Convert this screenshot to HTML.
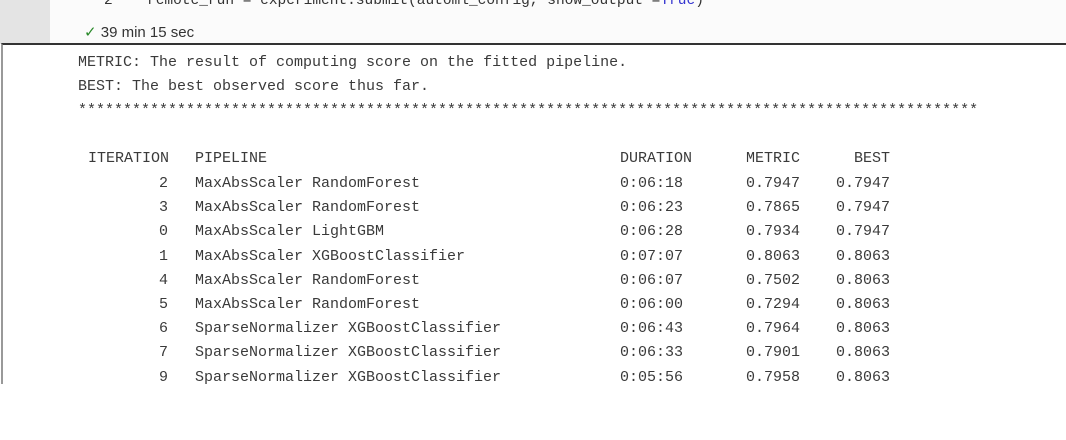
<!DOCTYPE html>
<html><head><meta charset="utf-8"><style>
html,body{margin:0;padding:0;width:1066px;height:440px;overflow:hidden;background:#fff;position:relative}
.top{position:absolute;left:0;top:0;width:1066px;height:44px;background:#fbfbfb}
.strip{position:absolute;left:0;top:0;width:50px;height:44px;background:#e4e4e4}
.code{position:absolute;top:-7px;font:14.5px "Liberation Mono",monospace;color:#333;white-space:pre}
.box{position:absolute;left:1px;top:43px;width:1070px;height:340px;border-top:2px solid #333;border-left:2px solid #999;background:#fff}
.m{position:absolute;font:15px "Liberation Mono",monospace;color:#3a3a3a;white-space:pre;line-height:18px}
.r{text-align:right}
</style></head><body>
<div class="top"><div class="strip"></div>
<div class="code" style="left:104px">2</div>
<div class="code" style="left:147px">remote_run = experiment.submit(automl_config, show_output =<span style="color:#3434d0">True</span>)</div>
<div style="position:absolute;left:84px;top:23px;font:15px 'Liberation Sans',sans-serif;color:#333;"><span style="color:#2a8a2a">✓</span> 39 min 15 sec</div>
</div>
<div class="box"></div>
<div id="t"></div>
<script>
var h='';
function put(x,y,s,right){h+='<div class="m'+(right?' r':'')+'" style="'+(right?'right:'+(1066-x)+'px':'left:'+x+'px')+';top:'+(y-9)+'px">'+s+'</div>';}
put(78,63,'METRIC: The result of computing score on the fitted pipeline.');
put(78,87,'BEST: The best observed score thus far.');
put(78,111,'*'.repeat(100));
put(88,159,'ITERATION');put(195,159,'PIPELINE');put(620,159,'DURATION');put(746,159,'METRIC');put(890,159,'BEST',1);
var rows=[['2','MaxAbsScaler RandomForest','0:06:18','0.7947','0.7947'],
['3','MaxAbsScaler RandomForest','0:06:23','0.7865','0.7947'],
['0','MaxAbsScaler LightGBM','0:06:28','0.7934','0.7947'],
['1','MaxAbsScaler XGBoostClassifier','0:07:07','0.8063','0.8063'],
['4','MaxAbsScaler RandomForest','0:06:07','0.7502','0.8063'],
['5','MaxAbsScaler RandomForest','0:06:00','0.7294','0.8063'],
['6','SparseNormalizer XGBoostClassifier','0:06:43','0.7964','0.8063'],
['7','SparseNormalizer XGBoostClassifier','0:06:33','0.7901','0.8063'],
['9','SparseNormalizer XGBoostClassifier','0:05:56','0.7958','0.8063']];
rows.forEach(function(r,i){var y=184+i*24.2;put(168,y,r[0],1);put(195,y,r[1]);put(620,y,r[2]);put(746,y,r[3]);put(836,y,r[4]);});
document.getElementById('t').innerHTML=h;
</script>
<div style="position:absolute;left:0;top:384px;width:1066px;height:56px;background:#fff"></div>
</body></html>
